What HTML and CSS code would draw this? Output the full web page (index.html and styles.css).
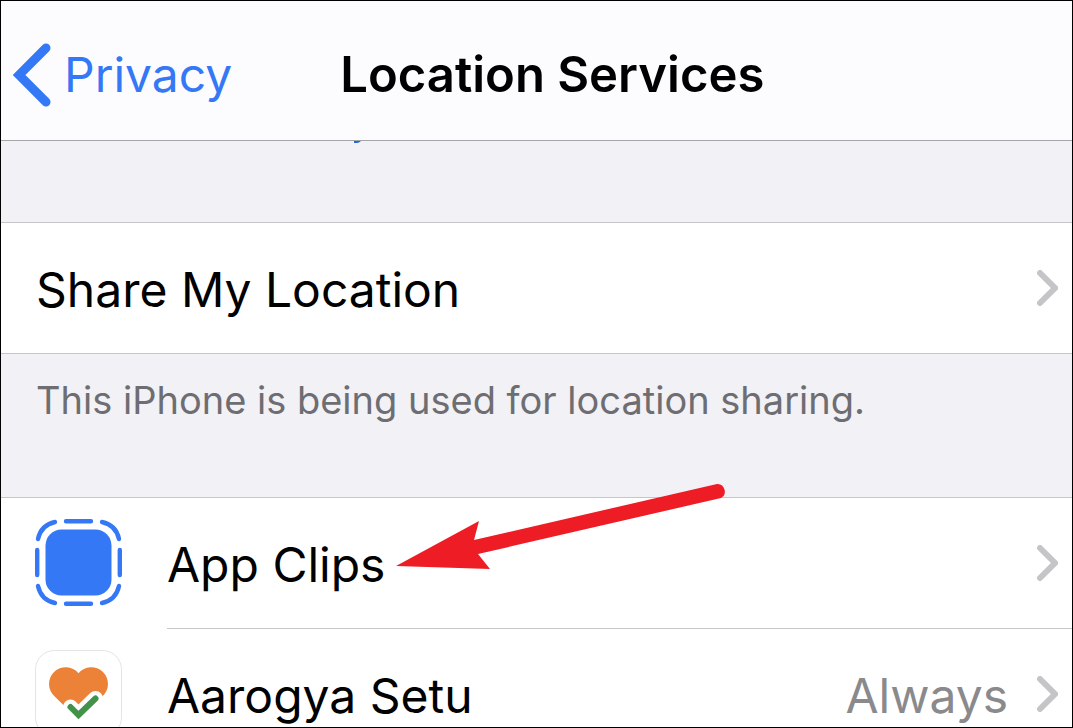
FILE: index.html
```html
<!DOCTYPE html>
<html lang="en">
<head>
    <meta charset="UTF-8">
    <meta name="viewport" content="width=device-width, initial-scale=1.0">
    <title>Location Services</title>
    <link rel="stylesheet" href="styles.css">
</head>
<body>

    <div class="screen">
        <header class="nav-bar">
            <a href="#" class="back-link">
                <svg class="back-icon" viewBox="0 0 38 64" aria-hidden="true">
                    <path d="M33 5L6 32L33 59" />
                </svg>
                Privacy
            </a>
            <h1>Location Services</h1>
        </header>

        <main>
            <div class="scrolled-text">
                <svg class="link-tail" viewBox="0 0 8 2" aria-hidden="true">
                    <path d="M0 0H7Q5 2 3 2H0Z" />
                </svg>
            </div>

            <a href="#" class="row share-row">
                <span class="label">Share My Location</span>
                <svg class="chevron" viewBox="0 0 22 36" aria-hidden="true">
                    <path d="M4 3L19 18L4 33" />
                </svg>
            </a>

            <p class="note">This iPhone is being used for location sharing.</p>

            <div class="app-list">
                <a href="#" class="row app-row">
                    <svg class="app-icon" viewBox="0 0 87 87" aria-hidden="true">
                        <rect x="10.5" y="10.5" width="66" height="66" rx="16" fill="#3478f6" />
                        <g class="dashes">
                            <path d="M31 2.2H56M31 84.8H56M2.2 31V56M84.8 31V56" />
                            <path d="M3 20Q6 6 20 3M67 3Q81 6 84 20M84 67Q81 81 67 84M20 84Q6 81 3 67" />
                        </g>
                    </svg>
                    <span class="app-body">
                        <span class="label">App Clips</span>
                        <svg class="chevron" viewBox="0 0 22 36" aria-hidden="true">
                            <path d="M4 3L19 18L4 33" />
                        </svg>
                    </span>
                </a>

                <a href="#" class="row app-row">
                    <svg class="app-icon" viewBox="0 0 87 87" aria-hidden="true">
                        <rect x="0.5" y="0.5" width="86" height="86" rx="19" fill="#fff" stroke="#e4e4e6" />
                        <path d="M43.5 23.2A16.7 16.7 0 1 0 19.7 46.5L43.5 70L67.3 46.5A16.7 16.7 0 1 0 43.5 23.2Z" fill="#eb8238" />
                        <path class="check-gap" d="M35.5 57L43.5 65L60.5 48.5" />
                        <path class="check" d="M35.5 57L43.5 65L60.5 48.5" />
                    </svg>
                    <span class="app-body">
                        <span class="label">Aarogya Setu</span>
                        <span class="value">Always</span>
                        <svg class="chevron" viewBox="0 0 22 36" aria-hidden="true">
                            <path d="M4 3L19 18L4 33" />
                        </svg>
                    </span>
                </a>

                <!-- Arrow pointing at the App Clips row -->
                <svg class="arrow" viewBox="0 0 330 86" aria-hidden="true">
                    <path d="M0 82L83 37L78 56L321 0A7.5 7.5 0 0 1 325 14L82 70L94 85Z" />
                </svg>
            </div>
        </main>
    </div>

</body>
</html>
```
FILE: styles.css
```css
* {
    box-sizing: border-box;
}

body {
    margin: 0;
    font-family: Inter, "Liberation Sans", sans-serif;
    font-size: 48px;
    line-height: 60px;
    color: #000;
}

a {
    color: inherit;
    text-decoration: none;
}

svg {
    display: block;
    flex: none;
}

.screen {
    height: 100vh;
    overflow: hidden;
    border: 1px solid #000;
    background-color: #f2f1f6;
}

.nav-bar {
    display: flex;
    align-items: center;
    gap: 108px;
    height: 140px;
    padding: 8px 12px 0;
    background-color: #fcfcff;
    border-bottom: 1px solid #a6a6aa;
}

.back-link {
    display: flex;
    align-items: center;
    gap: 13px;
    color: #3478f6;
}

.back-icon {
    width: 38px;
    height: 64px;
    fill: none;
    stroke: #3478f6;
    stroke-width: 9;
    stroke-linecap: round;
}

h1 {
    margin: 0;
    font-size: 49px;
    font-weight: 600;
    white-space: nowrap;
}

.scrolled-text {
    height: 81px;
    padding-left: 353px;
}

.link-tail {
    width: 8px;
    height: 2px;
    fill: #2469d8;
}

.row {
    display: flex;
    align-items: center;
    background-color: #fff;
}

.label,
.value {
    padding-top: 4px;
}

.label {
    flex: 1;
}

.share-row {
    height: 132px;
    padding: 0 14px 0 35px;
    border-top: 1px solid #c6c6c8;
    border-bottom: 1px solid #c6c6c8;
}

.chevron {
    width: 22px;
    height: 36px;
    fill: none;
    stroke: #c5c5c7;
    stroke-width: 6;
    stroke-linecap: round;
}

.note {
    height: 143px;
    margin: 0;
    padding: 21px 35px;
    font-size: 38px;
    line-height: 50px;
    color: #6d6d72;
}

.app-list {
    position: relative;
    border-top: 1px solid #c6c6c8;
}

.app-row {
    gap: 45px;
    padding-left: 34px;
}

.app-icon {
    width: 87px;
    height: 87px;
    margin-bottom: 2px;
}

.dashes {
    fill: none;
    stroke: #3478f6;
    stroke-width: 4.4;
    stroke-linecap: round;
}

.check-gap,
.check {
    fill: none;
    stroke-linecap: round;
}

.check-gap {
    stroke: #fff;
    stroke-width: 15;
}

.check {
    stroke: #43924a;
    stroke-width: 6;
}

.app-body {
    display: flex;
    flex: 1;
    align-items: center;
    height: 131px;
    padding-right: 14px;
    border-bottom: 1px solid #c6c6c8;
}

.value {
    margin-right: 28px;
    color: #8a8a8d;
}

.arrow {
    position: absolute;
    top: -14px;
    left: 395px;
    width: 330px;
    height: 86px;
    fill: #ee1d25;
}
```
